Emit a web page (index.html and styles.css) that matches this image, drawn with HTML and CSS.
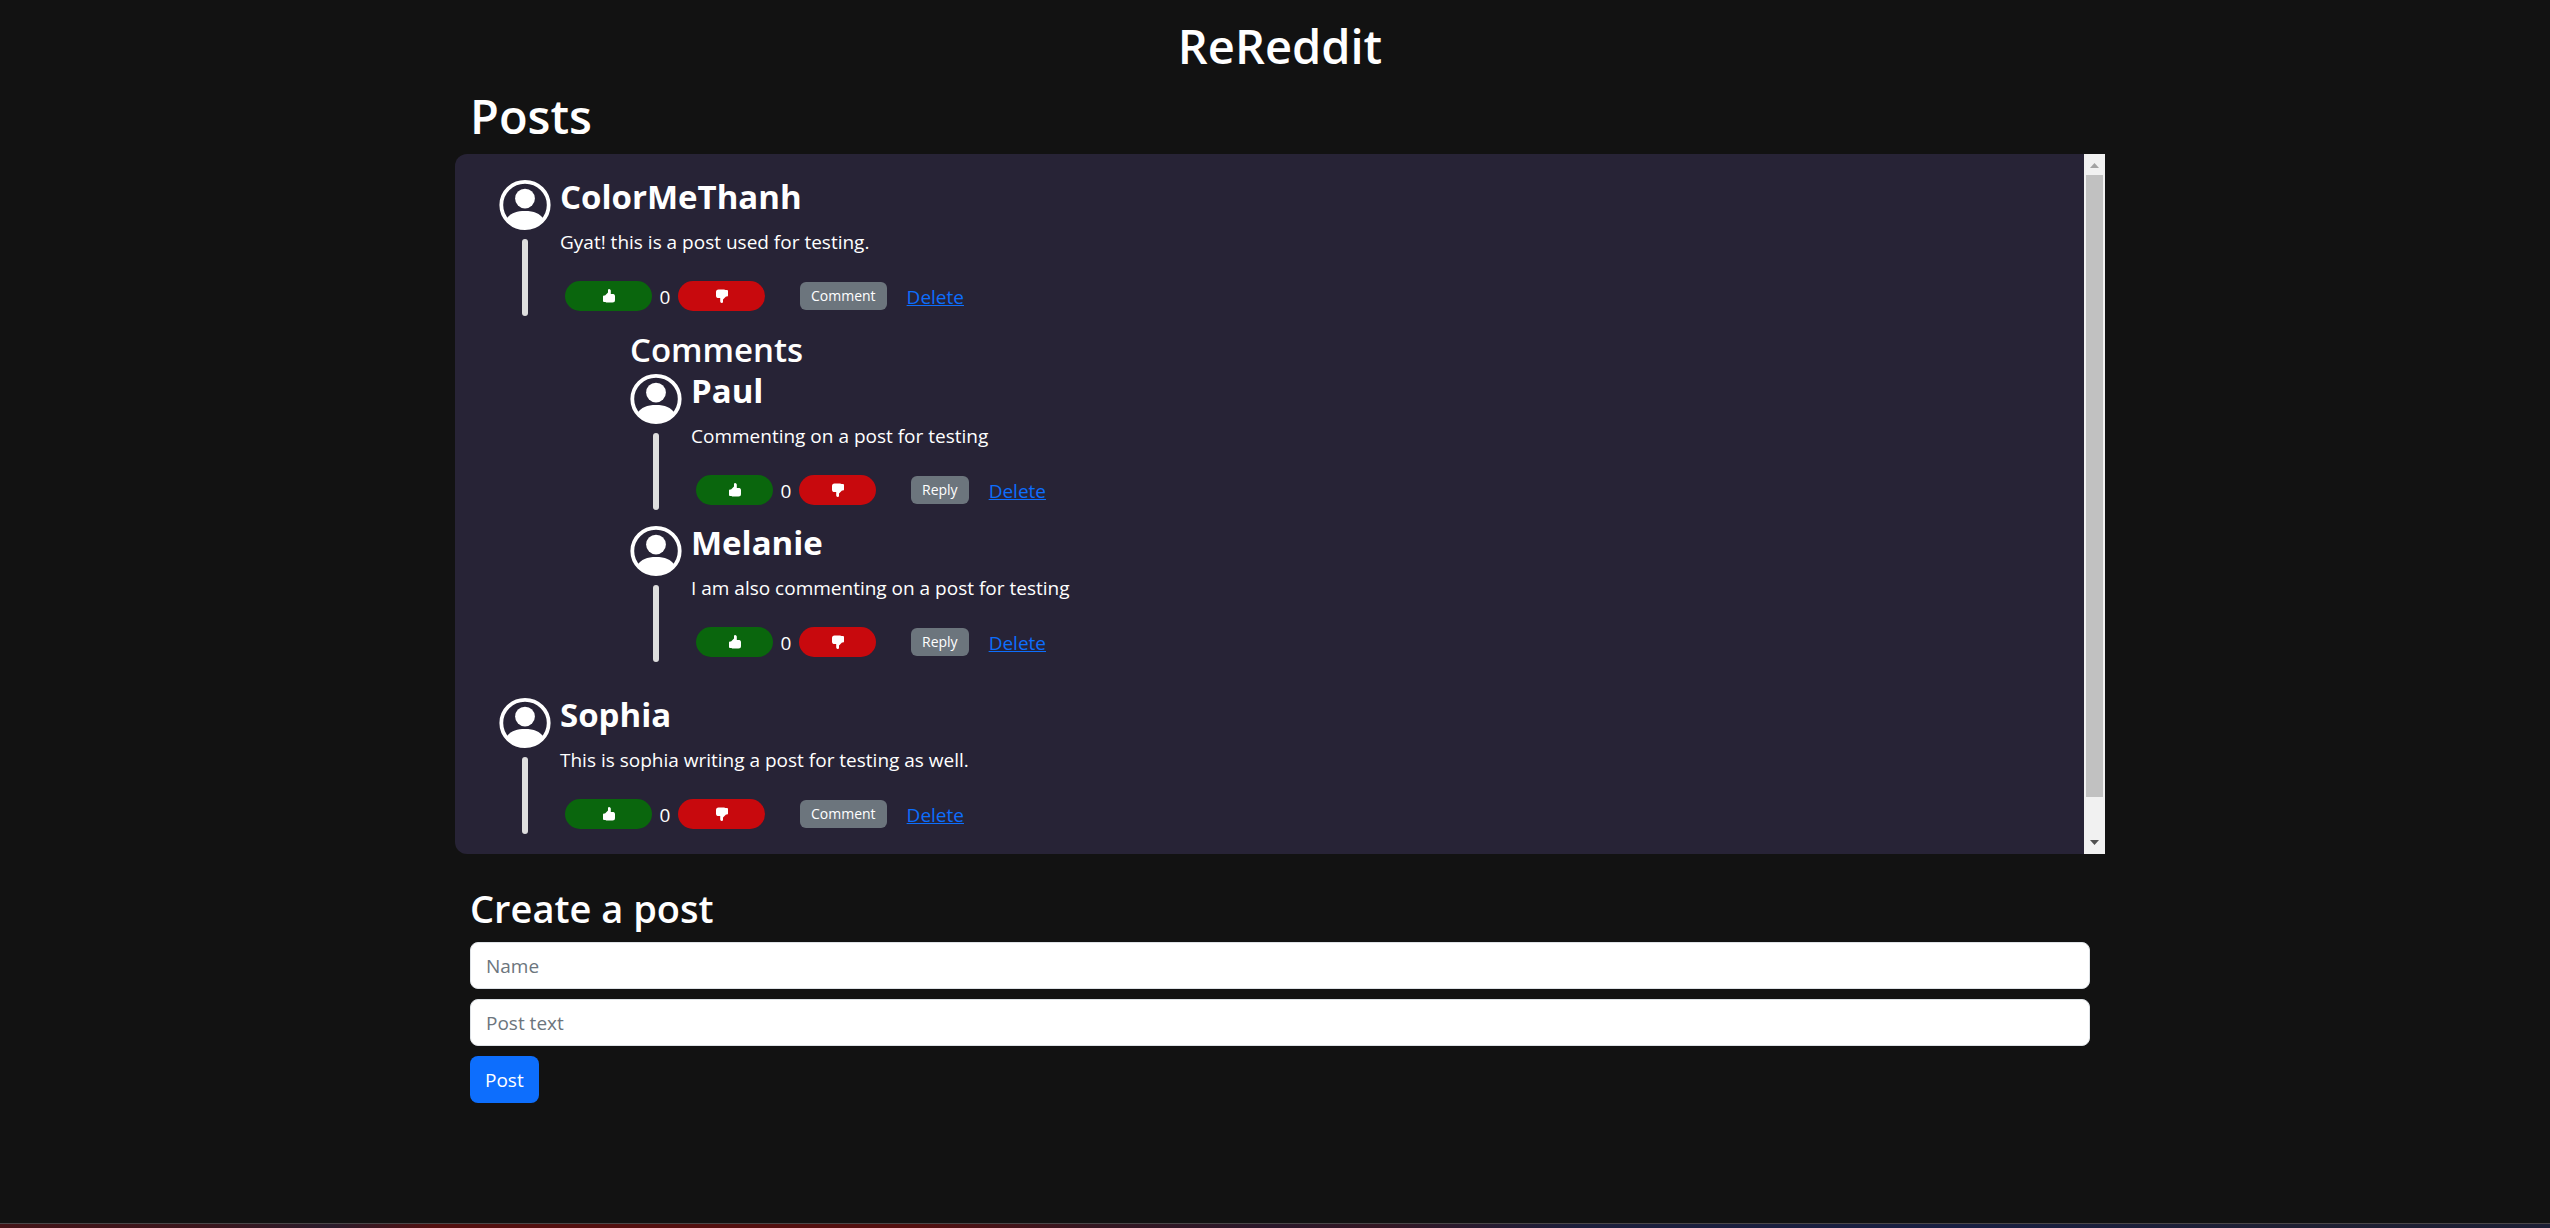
FILE: index.html
```html
<!DOCTYPE html>
<html lang="en">
<head>
<meta charset="utf-8">
<title>ReReddit</title>
<link rel="stylesheet" href="styles.css">
</head>
<body>
<svg class="sprite" aria-hidden="true">
  <symbol id="avatar" viewBox="0 0 52 50">
    <ellipse cx="26" cy="25" rx="23.700" ry="23.100" fill="none" stroke="#fff" stroke-width="3.800"/>
    <circle cx="26" cy="18.600" r="9.900" fill="#fff"/>
    <path d="M7.500 39C11 33.500 17 31 26 31S41 33.500 44.500 39C40 46 34 49 26 49S12 46 7.500 39Z" fill="#fff"/>
  </symbol>
  <symbol id="thumb" viewBox="0 0 12 14">
    <path d="M5 1Q5 0 6.200 0T7.800 1.500V5H10.500Q12 5.500 12 7V11Q12 13.500 9.500 13.500H4Q3 13.500 2.500 13H1Q0 13 0 12V7.500Q0 6.500 1 6.500H2L5 3.500Z" fill="#fff"/>
  </symbol>
</svg>
<div class="page">
  <div class="container">
    <h1 class="site-title">ReReddit</h1>
    <main>
      <h1 class="section-title">Posts</h1>
      <div class="posts-frame">
        <section class="posts">
          <article class="entry">
            <div class="rail"><svg class="avatar"><use href="#avatar"/></svg><span class="thread"></span></div>
            <div class="content">
              <h2 class="author">ColorMeThanh</h2>
              <p class="text">Gyat! this is a post used for testing.</p>
              <div class="actions">
                <button class="vote up" aria-label="Upvote"><svg class="thumb"><use href="#thumb"/></svg></button>
                <span class="score">0</span>
                <button class="vote down" aria-label="Downvote"><svg class="thumb"><use href="#thumb"/></svg></button>
                <button class="reply">Comment</button>
                <a class="delete" href="#">Delete</a>
              </div>
            </div>
          </article>
          <section class="comments">
            <h2 class="comments-title">Comments</h2>
            <article class="entry">
              <div class="rail"><svg class="avatar"><use href="#avatar"/></svg><span class="thread"></span></div>
              <div class="content">
                <h2 class="author">Paul</h2>
                <p class="text">Commenting on a post for testing</p>
                <div class="actions">
                  <button class="vote up" aria-label="Upvote"><svg class="thumb"><use href="#thumb"/></svg></button>
                  <span class="score">0</span>
                  <button class="vote down" aria-label="Downvote"><svg class="thumb"><use href="#thumb"/></svg></button>
                  <button class="reply">Reply</button>
                  <a class="delete" href="#">Delete</a>
                </div>
              </div>
            </article>
            <article class="entry">
              <div class="rail"><svg class="avatar"><use href="#avatar"/></svg><span class="thread"></span></div>
              <div class="content">
                <h2 class="author">Melanie</h2>
                <p class="text">I am also commenting on a post for testing</p>
                <div class="actions">
                  <button class="vote up" aria-label="Upvote"><svg class="thumb"><use href="#thumb"/></svg></button>
                  <span class="score">0</span>
                  <button class="vote down" aria-label="Downvote"><svg class="thumb"><use href="#thumb"/></svg></button>
                  <button class="reply">Reply</button>
                  <a class="delete" href="#">Delete</a>
                </div>
              </div>
            </article>
          </section>
          <article class="entry">
            <div class="rail"><svg class="avatar"><use href="#avatar"/></svg><span class="thread"></span></div>
            <div class="content">
              <h2 class="author">Sophia</h2>
              <p class="text">This is sophia writing a post for testing as well.</p>
              <div class="actions">
                <button class="vote up" aria-label="Upvote"><svg class="thumb"><use href="#thumb"/></svg></button>
                <span class="score">0</span>
                <button class="vote down" aria-label="Downvote"><svg class="thumb"><use href="#thumb"/></svg></button>
                <button class="reply">Comment</button>
                <a class="delete" href="#">Delete</a>
              </div>
            </div>
          </article>
        </section>
        <div class="scrollbar" aria-hidden="true">
          <svg class="arrow" viewBox="0 0 21 21"><path d="M6 14L10.500 9L15 14Z" fill="#a3a3a3"/></svg>
          <div class="track"><div class="bar"></div></div>
          <svg class="arrow" viewBox="0 0 21 21"><path d="M6 7L10.500 12L15 7Z" fill="#505050"/></svg>
        </div>
      </div>
      <form class="create">
        <h2 class="create-title">Create a post</h2>
        <input class="field" type="text" placeholder="Name" aria-label="Name">
        <input class="field" type="text" placeholder="Post text" aria-label="Post text">
        <button class="submit" type="button">Post</button>
      </form>
    </main>
  </div>
</div>
<footer class="strip"></footer>
</body>
</html>
```
FILE: styles.css
```css
*, *::before, *::after { box-sizing: border-box; }
body {
  margin: 0;
  min-height: 100vh;
  display: flex;
  flex-direction: column;
  background: #121212;
  color: #fff;
  font: 400 19px/30px "Open Sans", "Noto Sans", sans-serif;
}
h1, h2, p { margin: 0; }
button, input { font: inherit; }
.sprite { position: absolute; width: 0; height: 0; }
.page { padding: 16px 0 0 10px; }
.container {
  width: 100%;
  max-width: 1650px;
  margin: 0 auto;
}
.site-title, .section-title {
  font-size: 47px;
  font-weight: 600;
  line-height: 60px;
}
.site-title { margin-bottom: 10px; text-align: center; }
.section-title { margin-bottom: 8px; padding: 0 15px; }
.posts-frame {
  display: flex;
  height: 700px;
  overflow: hidden;
  background: #272336;
  border-radius: 12px 0 0 12px;
}
.posts {
  flex: 1;
  padding: 26px 44px 45px;
  overflow-y: auto;
  scrollbar-width: none;
}
.scrollbar {
  display: flex;
  flex-direction: column;
  width: 21px;
  background: #f1f1f1;
}
.arrow { display: block; width: 21px; height: 21px; }
.track { flex: 1; padding: 0 2px; }
.bar { height: 622px; background: #c1c1c1; }
.entry {
  display: flex;
  gap: 9px;
  margin-bottom: 16px;
}
.rail {
  display: flex;
  flex-direction: column;
  align-items: center;
  gap: 9px;
}
.avatar { width: 52px; height: 50px; }
.thread {
  width: 6px;
  height: 77px;
  border-radius: 3px;
  background: #dedede;
}
.author {
  font-size: 33px;
  font-weight: 700;
  line-height: 33px;
}
.text { margin-top: 14px; }
.actions {
  display: flex;
  align-items: center;
  margin-top: 24px;
  padding-left: 5px;
}
.vote {
  width: 87px;
  height: 30px;
  padding: 0;
  border: 0;
  border-radius: 15px;
  display: grid;
  place-items: center;
}
.comments .vote { width: 77px; }
.up { background: #0a660d; }
.down { background: #c8090d; }
.thumb { width: 12px; height: 14px; }
.down .thumb { transform: rotate(180deg); }
.score { width: 26px; text-align: center; }
.score, .delete { height: 30px; line-height: 32px; }
.reply {
  height: 28px;
  margin: 0 20px 0 35px;
  padding: 0 11px;
  border: 0;
  border-radius: 6px;
  background: #6c757d;
  color: #fff;
  font-size: 14px;
  line-height: 28px;
}
.delete { color: #0d6efd; }
.comments { padding: 0 0 20px 131px; }
.comments-title, .create-title { font-weight: 600; }
.comments-title {
  margin-bottom: 6px;
  font-size: 33px;
  line-height: 36px;
}
.create { padding: 31px 15px 0; }
.create-title {
  margin-bottom: 11px;
  font-size: 38px;
  line-height: 46px;
}
.field {
  display: block;
  width: 100%;
  height: 47px;
  margin-bottom: 10px;
  padding: 0 15px;
  border: 1px solid #dee2e6;
  border-radius: 8px;
  background: #fff;
  color: #212529;
}
.field::placeholder { color: #6c757d; opacity: 1; }
.submit {
  height: 47px;
  padding: 0 15px;
  border: 0;
  border-radius: 8px;
  background: #0d6efd;
  color: #fff;
}
.strip {
  height: 5px;
  margin-top: auto;
  border-top: 1px solid #4b4749;
  background: linear-gradient(90deg, #451418 0, #3c161d 8%, #2b1c2c 13%, #541010 17%, #541010 36%, #351722 43%, #2b182b 50%, #351724 54%, #1d1f3c 62%, #191f42 77%, #202033 90%, #1d1f35 100%);
}
```
